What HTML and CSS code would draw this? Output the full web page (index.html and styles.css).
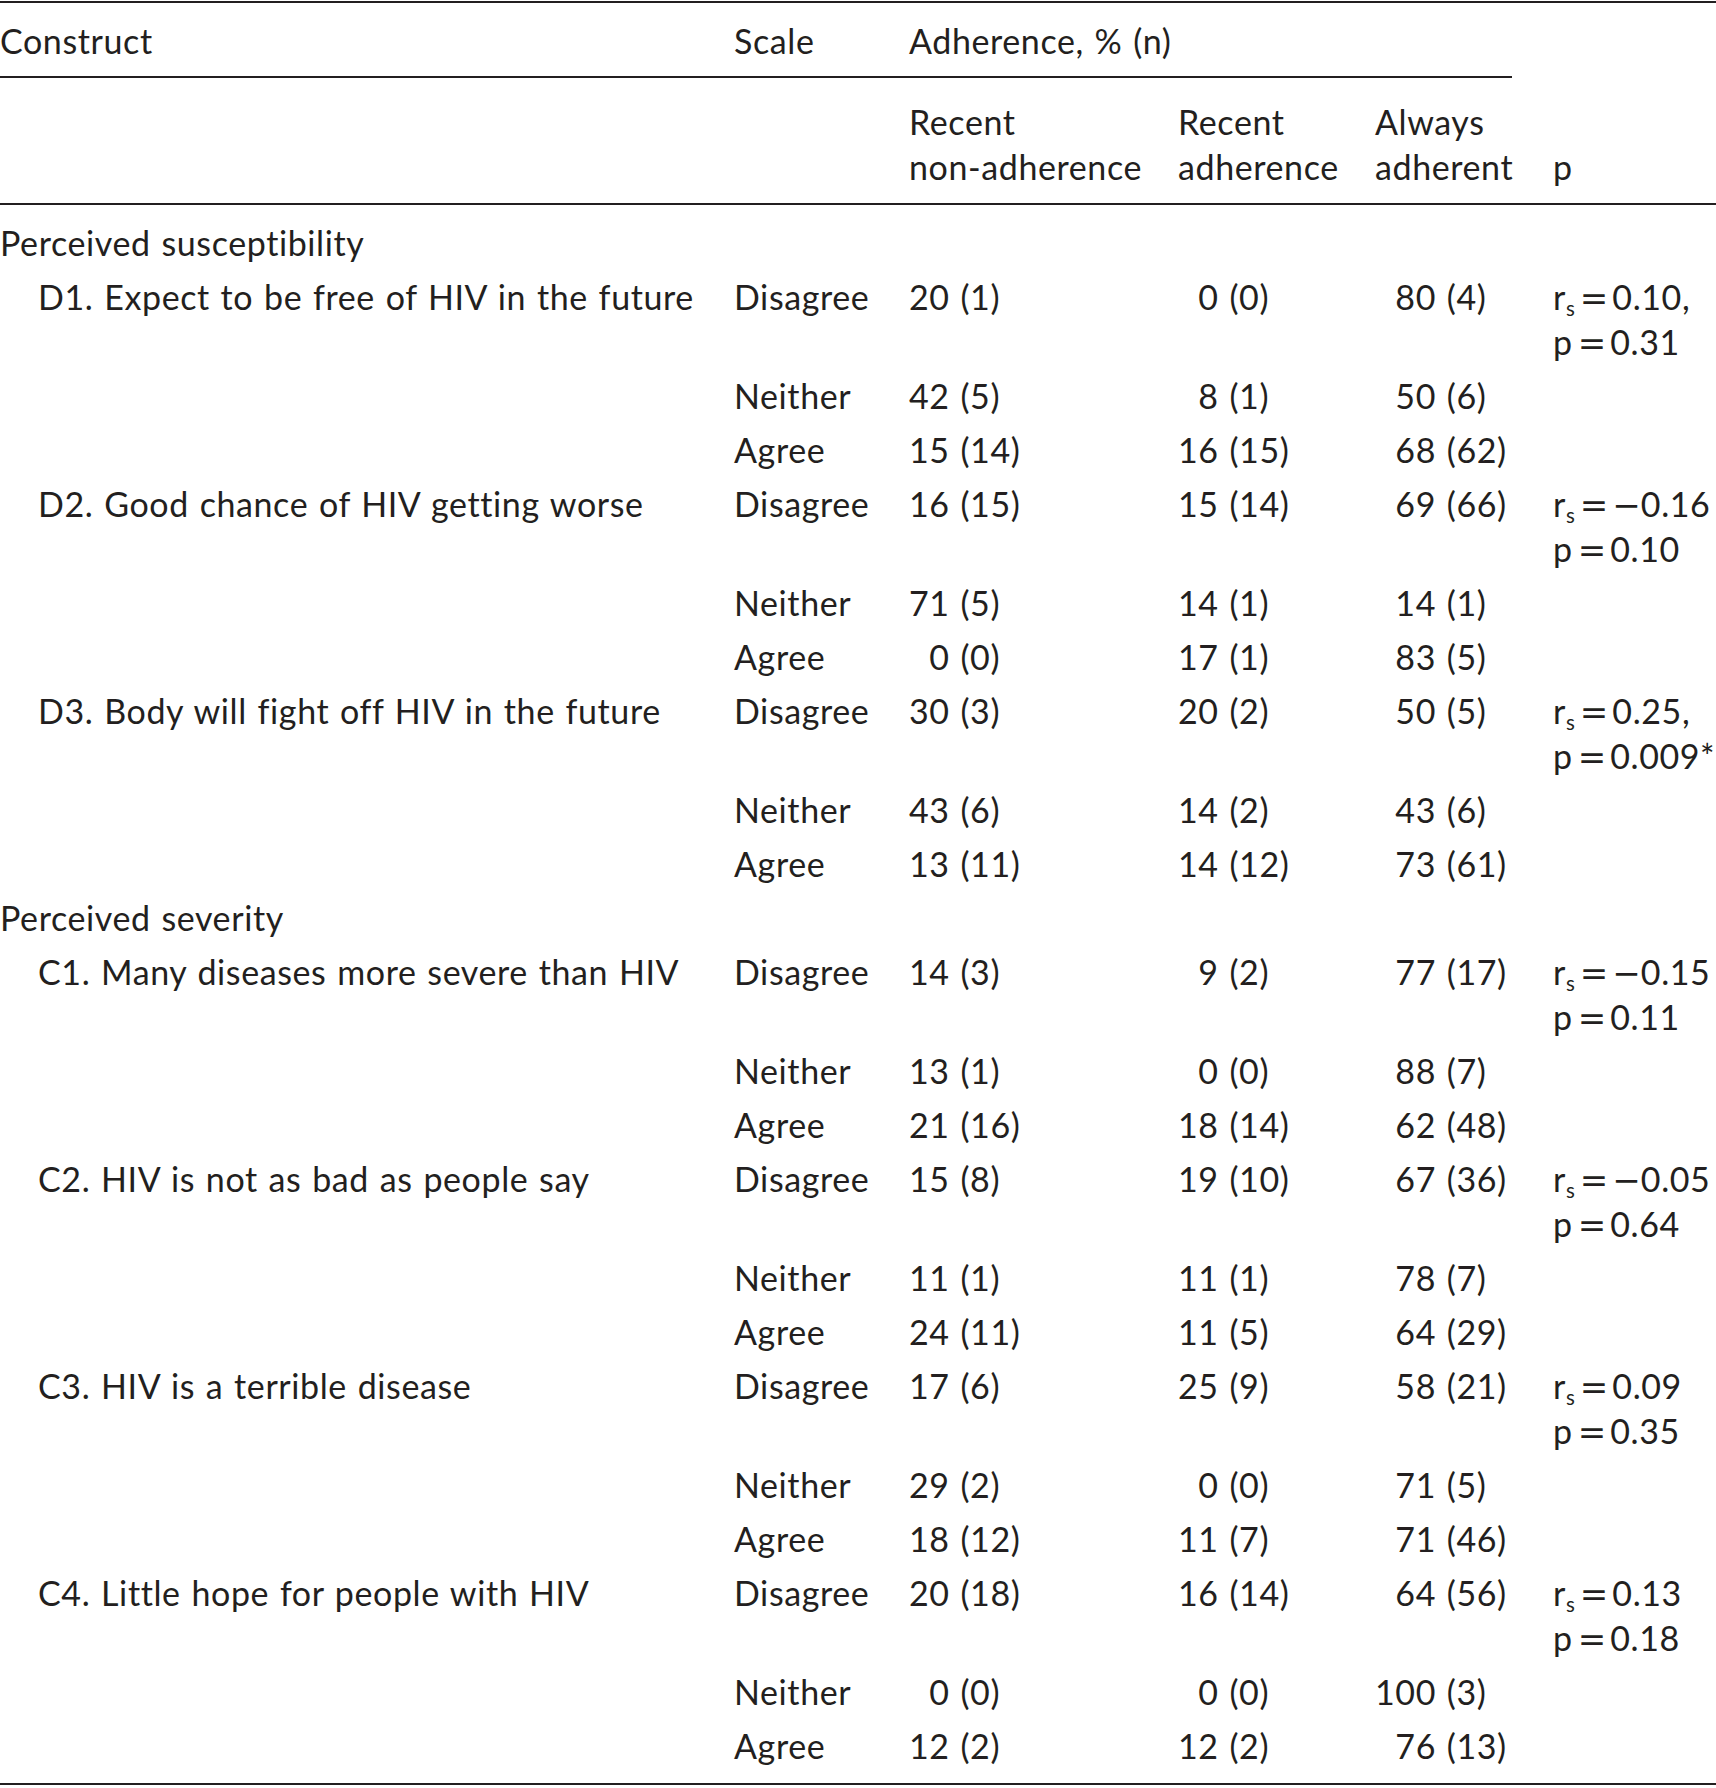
FILE: index.html
```html
<!DOCTYPE html>
<html lang="en">
<head>
<meta charset="utf-8">
<title>Adherence by health beliefs</title>
<link rel="stylesheet" href="styles.css">
</head>
<body>
<table class="tbl">
  <colgroup>
    <col class="c-construct">
    <col class="c-scale">
    <col class="c-nonadh">
    <col class="c-adh">
    <col class="c-always">
    <col class="c-p">
  </colgroup>
  <thead>
    <tr class="head-1">
      <th class="rule">Construct</th>
      <th class="rule">Scale</th>
      <th class="rule" colspan="3">Adherence, % (n)</th>
      <th class="p-head" rowspan="2">p</th>
    </tr>
    <tr class="head-2">
      <th colspan="2"></th>
      <th>Recent<br>non-adherence</th>
      <th>Recent<br>adherence</th>
      <th>Always<br>adherent</th>
    </tr>
  </thead>
  <tbody>
    <tr class="section first"><td colspan="6">Perceived susceptibility</td></tr>
    <tr><td class="item">D1. Expect to be free of HIV in the future</td><td>Disagree</td><td class="num">20 (1)</td><td class="num">&#8199;0 (0)</td><td class="num">&#8199;80 (4)</td><td class="stat">r<sub>s</sub><span class="eq">=</span>0.10,<br>p<span class="eq">=</span>0.31</td></tr>
    <tr><td></td><td>Neither</td><td class="num">42 (5)</td><td class="num">&#8199;8 (1)</td><td class="num">&#8199;50 (6)</td><td></td></tr>
    <tr><td></td><td>Agree</td><td class="num">15 (14)</td><td class="num">16 (15)</td><td class="num">&#8199;68 (62)</td><td></td></tr>
    <tr><td class="item">D2. Good chance of HIV getting worse</td><td>Disagree</td><td class="num">16 (15)</td><td class="num">15 (14)</td><td class="num">&#8199;69 (66)</td><td class="stat">r<sub>s</sub><span class="eq">=</span><span class="minus">&minus;</span>0.16<br>p<span class="eq">=</span>0.10</td></tr>
    <tr><td></td><td>Neither</td><td class="num">71 (5)</td><td class="num">14 (1)</td><td class="num">&#8199;14 (1)</td><td></td></tr>
    <tr><td></td><td>Agree</td><td class="num">&#8199;0 (0)</td><td class="num">17 (1)</td><td class="num">&#8199;83 (5)</td><td></td></tr>
    <tr><td class="item">D3. Body will fight off HIV in the future</td><td>Disagree</td><td class="num">30 (3)</td><td class="num">20 (2)</td><td class="num">&#8199;50 (5)</td><td class="stat">r<sub>s</sub><span class="eq">=</span>0.25,<br>p<span class="eq">=</span>0.009*</td></tr>
    <tr><td></td><td>Neither</td><td class="num">43 (6)</td><td class="num">14 (2)</td><td class="num">&#8199;43 (6)</td><td></td></tr>
    <tr><td></td><td>Agree</td><td class="num">13 (11)</td><td class="num">14 (12)</td><td class="num">&#8199;73 (61)</td><td></td></tr>
    <tr class="section"><td colspan="6">Perceived severity</td></tr>
    <tr><td class="item">C1. Many diseases more severe than HIV</td><td>Disagree</td><td class="num">14 (3)</td><td class="num">&#8199;9 (2)</td><td class="num">&#8199;77 (17)</td><td class="stat">r<sub>s</sub><span class="eq">=</span><span class="minus">&minus;</span>0.15<br>p<span class="eq">=</span>0.11</td></tr>
    <tr><td></td><td>Neither</td><td class="num">13 (1)</td><td class="num">&#8199;0 (0)</td><td class="num">&#8199;88 (7)</td><td></td></tr>
    <tr><td></td><td>Agree</td><td class="num">21 (16)</td><td class="num">18 (14)</td><td class="num">&#8199;62 (48)</td><td></td></tr>
    <tr><td class="item">C2. HIV is not as bad as people say</td><td>Disagree</td><td class="num">15 (8)</td><td class="num">19 (10)</td><td class="num">&#8199;67 (36)</td><td class="stat">r<sub>s</sub><span class="eq">=</span><span class="minus">&minus;</span>0.05<br>p<span class="eq">=</span>0.64</td></tr>
    <tr><td></td><td>Neither</td><td class="num">11 (1)</td><td class="num">11 (1)</td><td class="num">&#8199;78 (7)</td><td></td></tr>
    <tr><td></td><td>Agree</td><td class="num">24 (11)</td><td class="num">11 (5)</td><td class="num">&#8199;64 (29)</td><td></td></tr>
    <tr><td class="item">C3. HIV is a terrible disease</td><td>Disagree</td><td class="num">17 (6)</td><td class="num">25 (9)</td><td class="num">&#8199;58 (21)</td><td class="stat">r<sub>s</sub><span class="eq">=</span>0.09<br>p<span class="eq">=</span>0.35</td></tr>
    <tr><td></td><td>Neither</td><td class="num">29 (2)</td><td class="num">&#8199;0 (0)</td><td class="num">&#8199;71 (5)</td><td></td></tr>
    <tr><td></td><td>Agree</td><td class="num">18 (12)</td><td class="num">11 (7)</td><td class="num">&#8199;71 (46)</td><td></td></tr>
    <tr><td class="item">C4. Little hope for people with HIV</td><td>Disagree</td><td class="num">20 (18)</td><td class="num">16 (14)</td><td class="num">&#8199;64 (56)</td><td class="stat">r<sub>s</sub><span class="eq">=</span>0.13<br>p<span class="eq">=</span>0.18</td></tr>
    <tr><td></td><td>Neither</td><td class="num">&#8199;0 (0)</td><td class="num">&#8199;0 (0)</td><td class="num">100 (3)</td><td></td></tr>
    <tr class="last"><td></td><td>Agree</td><td class="num">12 (2)</td><td class="num">12 (2)</td><td class="num">&#8199;76 (13)</td><td></td></tr>
  </tbody>
</table>
</body>
</html>
```
FILE: styles.css
```css
html, body {
  margin: 0;
  padding: 0;
  background: #ffffff;
}
body {
  width: 1716px;
  overflow: hidden;
  font-family: "Lato", "Open Sans", sans-serif;
  font-size: 34px;
  letter-spacing: 0.6px;
  word-spacing: 1.5px;
  font-variant-ligatures: none;
  color: #231f20;
}
.tbl {
  width: 1716px;
  table-layout: fixed;
  border-collapse: collapse;
  border-top: 2px solid #231f20;
  border-bottom: 2px solid #231f20;
  margin-top: 1px;
}
.c-construct { width: 734px; }
.c-scale { width: 175px; }
.c-nonadh { width: 269px; }
.c-adh { width: 197px; }
.c-always { width: 137px; }
.c-p { width: 204px; }

.tbl th,
.tbl td {
  padding: 0;
  text-align: left;
  font-weight: normal;
  line-height: 45px;
  white-space: nowrap;
  vertical-align: top;
}
.head-1 th {
  padding: 15px 0 13px;
}
.head-1 th.rule {
  border-bottom: 2px solid #231f20;
}
.head-1 th.p-head {
  vertical-align: bottom;
  padding: 0 0 14px 41px;
}
.head-2 th {
  vertical-align: bottom;
  padding: 21px 0 14px;
}
.head-2 { border-bottom: 2px solid #231f20; }

.tbl tbody td {
  padding: 4px 0 5px;
}
.tbl tbody tr.first td { padding-top: 15px; }
.tbl tbody tr.last td { padding-bottom: 15px; }
.tbl td.item { padding-left: 38px; }
.tbl td.stat { padding-left: 41px; }
.num { font-variant-numeric: tabular-nums; }
.stat sub {
  font-size: 0.6em;
  line-height: 0;
  vertical-align: -0.3em;
  letter-spacing: 0;
}
.eq,
.minus {
  font-family: "DejaVu Sans", sans-serif;
  letter-spacing: 0;
  line-height: 0;
}
.eq { margin: 0 4px 0 5px; }
```
